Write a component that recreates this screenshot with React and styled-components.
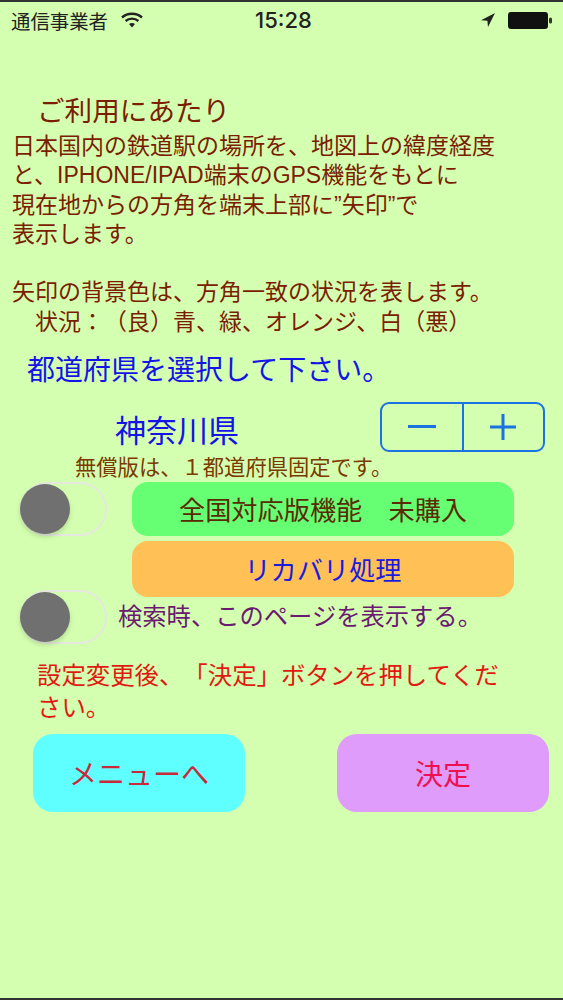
import styled, { createGlobalStyle } from 'styled-components'

const GlobalStyle = createGlobalStyle`
  html, body {
    margin: 0;
    padding: 0;
    background: #d5ffb0;
  }
  body {
    font-family: "Liberation Sans", "Noto Sans CJK JP", sans-serif;
    text-spacing-trim: space-all;
  }
`

const Page = styled.div`
  width: 563px;
  height: 1000px;
  box-sizing: border-box;
  border-top: 2px solid #333;
  border-bottom: 2px solid #333;
  background: #d5ffb0;
  overflow: hidden;
`

const StatusBar = styled.div`
  display: flex;
  align-items: center;
  height: 36px;
  padding: 0 11px;
  color: #222;
`

const StatusSide = styled.div`
  flex: 1;
  display: flex;
  align-items: center;
  gap: 13px;
  justify-content: ${(p) => (p.$right ? 'flex-end' : 'flex-start')};
  font-size: 19.4px;
`

const Clock = styled.div`
  margin-left: 4px;
  font-size: 22px;
  font-weight: 500;
  font-family: Inter, "Liberation Sans", sans-serif;
`

const Content = styled.div`
  padding: 0 12px;
`

const Title = styled.h1`
  margin: 59px 0 0 25px;
  font-size: 27.6px;
  line-height: 30px;
  font-weight: 400;
  color: #7a1d00;
`

const Intro = styled.p`
  margin: 5px 0 0;
  font-size: 23px;
  line-height: 29.3px;
  color: #7a1d00;
  white-space: pre;
`

const Prompt = styled.div`
  margin: 16px 0 0 15px;
  font-size: 28px;
  line-height: 36px;
  color: #1414e6;
`

const PrefRow = styled.div`
  display: flex;
  justify-content: space-between;
  align-items: flex-end;
  margin: 13px 6px 0 103px;
`

const PrefName = styled.div`
  font-size: 31px;
  line-height: 40px;
  color: #1414e6;
`

const Stepper = styled.div`
  display: flex;
  width: 165px;
  height: 50px;
  box-sizing: border-box;
  border: 2px solid #1a73e0;
  border-radius: 9px;
`

const StepButton = styled.div`
  flex: 1;
  display: flex;
  align-items: center;
  justify-content: center;
  color: #1a73e0;
  & + & {
    border-left: 2px solid #1a73e0;
  }
`

const Note = styled.div`
  margin: 3px 0 0 63px;
  font-size: 21.3px;
  line-height: 26px;
  color: #7a3a00;
`

const SwitchRow = styled.div`
  display: grid;
  grid-template-columns: 120px 382px;
  align-items: center;
  margin-top: 1px;
`

const Track = styled.div`
  position: relative;
  width: 87px;
  height: 54px;
  margin-left: 8px;
  box-sizing: border-box;
  border: 2px solid #e4e8e0;
  border-radius: 27px;
`

const Knob = styled.div`
  position: absolute;
  left: -2px;
  top: 0;
  width: 50px;
  height: 50px;
  border-radius: 50%;
  background: #707070;
  box-shadow: 0 3px 5px rgba(0, 0, 0, 0.15);
`

const ActionButton = styled.div`
  height: ${(p) => p.$height}px;
  border-radius: 16px;
  display: flex;
  align-items: center;
  justify-content: center;
  font-size: 26.2px;
  background: ${(p) => p.$bg};
  color: ${(p) => p.$color};
`

const RecoveryRow = styled.div`
  margin: 5px 0 0 120px;
  width: 382px;
`

const SearchRow = styled.div`
  display: flex;
  align-items: center;
  margin-top: -7px;
`

const SearchLabel = styled.div`
  margin: 0 0 5px 11px;
  font-size: 24.3px;
  color: #6a1a70;
`

const Warning = styled.div`
  margin: 16px 30px 0 25px;
  font-size: 24.4px;
  line-height: 32px;
  color: #e01a10;
`

const NavRow = styled.div`
  display: flex;
  justify-content: space-between;
  margin: 10px 2px 0 21px;
`

const NavButton = styled.div`
  width: 212px;
  height: 78px;
  border-radius: 20px;
  display: flex;
  align-items: center;
  justify-content: center;
  font-size: 28px;
  background: ${(p) => p.$bg};
  color: ${(p) => p.$color};
`

const WifiIcon = () => (
  <svg width="22" height="16" viewBox="0 0 22 16" fill="none" stroke="#222" strokeWidth="2.4">
    <path d="M1 5.5C6.5 0.5 15.5 0.5 21 5.5" />
    <path d="M4.6 9C8.2 5.8 13.8 5.8 17.4 9" />
    <path d="M11 15.5l-3-3.5c1.8-1.4 4.2-1.4 6 0z" fill="#222" stroke="none" />
  </svg>
)

const LocationIcon = () => (
  <svg width="14" height="14" viewBox="0 0 14 14">
    <path d="M14 0L0 7.2l6.4.6L7 14z" fill="#222" />
  </svg>
)

const Battery = () => (
  <svg width="44" height="17" viewBox="0 0 44 17">
    <rect x="0" y="0" width="40" height="17" rx="3" fill="#111" />
    <rect x="41" y="5.5" width="3" height="6" rx="1.5" fill="#333" />
  </svg>
)

const SettingSwitch = () => (
  <Track>
    <Knob />
  </Track>
)

const App = () => {
  return (
    <Page>
      <GlobalStyle />
      <StatusBar>
        <StatusSide>
          通信事業者
          <WifiIcon />
        </StatusSide>
        <Clock>15:28</Clock>
        <StatusSide $right>
          <LocationIcon />
          <Battery />
        </StatusSide>
      </StatusBar>
      <Content>
        <Title>ご利用にあたり</Title>
        <Intro>
          {'日本国内の鉄道駅の場所を、地図上の緯度経度\nと、IPHONE/IPAD端末のGPS機能をもとに\n現在地からの方角を端末上部に”矢印”で\n表示します。\n\n矢印の背景色は、方角一致の状況を表します。\n　状況：（良）青、緑、オレンジ、白（悪）'}
        </Intro>
        <Prompt>都道府県を選択して下さい。</Prompt>
        <PrefRow>
          <PrefName>神奈川県</PrefName>
          <Stepper>
            <StepButton>
              <svg width="28" height="4" viewBox="0 0 28 4"><rect width="28" height="3" fill="currentColor" /></svg>
            </StepButton>
            <StepButton>
              <svg width="28" height="28" viewBox="0 0 28 28"><path d="M14 1v26M1 14h26" stroke="currentColor" strokeWidth="3" /></svg>
            </StepButton>
          </Stepper>
        </PrefRow>
        <Note>無償版は、１都道府県固定です。</Note>
        <SwitchRow>
          <SettingSwitch />
          <ActionButton $height={54} $bg="#66ff73" $color="#5a2a00">全国対応版機能　未購入</ActionButton>
        </SwitchRow>
        <RecoveryRow>
          <ActionButton $height={56} $bg="#ffc056" $color="#1a1ae0">リカバリ処理</ActionButton>
        </RecoveryRow>
        <SearchRow>
          <SettingSwitch />
          <SearchLabel>検索時、このページを表示する。</SearchLabel>
        </SearchRow>
        <Warning>設定変更後、「決定」ボタンを押してください。</Warning>
        <NavRow>
          <NavButton $bg="#60ffff" $color="#c82a3a">メニューへ</NavButton>
          <NavButton $bg="#e09cfa" $color="#f01050">決定</NavButton>
        </NavRow>
      </Content>
    </Page>
  )
}

export default App
